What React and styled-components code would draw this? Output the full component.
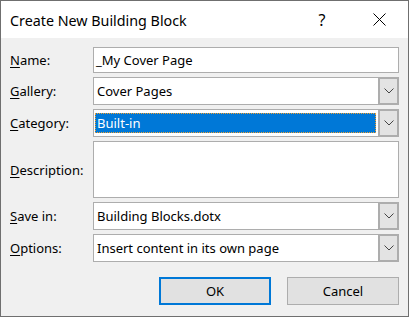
import React from "react"
import styled, { createGlobalStyle } from "styled-components"

const GlobalStyle = createGlobalStyle`
  html, body {
    margin: 0;
    padding: 0;
    background: #f0f0f0;
  }
  body {
    font-family: "Segoe UI", "Noto Sans", "Open Sans", sans-serif;
    color: #000;
  }
`

const Window = styled.div`
  width: 409px;
  height: 317px;
  box-sizing: border-box;
  border: 1px solid #6f6f6f;
  background: #f0f0f0;
  display: flex;
  flex-direction: column;
`

const TitleBar = styled.div`
  height: 37px;
  background: #fff;
  display: flex;
  align-items: center;
  padding-left: 9px;
`

const Title = styled.span`
  flex: 1;
  font-size: 14.3px;
  color: #000;
  padding-top: 1px;
`

const TitleButton = styled.div`
  width: ${p => p.w}px;
  height: 37px;
  display: flex;
  align-items: center;
  justify-content: center;
  font-size: 16px;
`

const Body = styled.div`
  flex: 1;
  padding: 9px 9px 11px 9px;
  display: flex;
  flex-direction: column;
`

const Form = styled.div`
  display: grid;
  grid-template-columns: 83px 1fr;
  row-gap: 4px;
  align-items: center;
`

const Label = styled.label`
  font-size: 13px;
  u {
    text-decoration: underline;
    text-underline-offset: 2px;
  }
`

const TextBox = styled.div`
  height: ${p => p.h || 26}px;
  box-sizing: border-box;
  background: #fff;
  border: 1px solid #adadad;
  font-size: 13px;
  display: flex;
  align-items: ${p => (p.h ? "flex-start" : "center")};
  padding-left: 2px;
`

const Combo = styled.div`
  height: 28px;
  box-sizing: border-box;
  background: #fff;
  border: 1px solid #adadad;
  display: flex;
  align-items: stretch;
`

const ComboValue = styled.div`
  flex: 1;
  display: flex;
  align-items: center;
  padding: 3px 1px 3px 1px;
`

const ComboText = styled.div`
  flex: 1;
  height: 100%;
  box-sizing: border-box;
  display: flex;
  align-items: center;
  font-size: 13px;
  padding-left: 2px;
  background: ${p => (p.selected ? "#0078d7" : "transparent")};
  color: ${p => (p.selected ? "#fff" : "#000")};
  outline: ${p => (p.selected ? "1px dotted #f0a030" : "none")};
  outline-offset: -1px;
  margin-right: ${p => (p.selected ? 1 : 0)}px;
`

const DropButton = styled.div`
  width: 21px;
  margin: -1px -1px -1px 0;
  box-sizing: border-box;
  border: 2px solid #adadad;
  background: #e3e3e3;
  display: flex;
  align-items: center;
  justify-content: center;
`

const Buttons = styled.div`
  display: flex;
  justify-content: flex-end;
  gap: 16px;
  margin-top: 15px;
`

const Button = styled.div`
  width: 112px;
  height: 28px;
  box-sizing: border-box;
  background: #e1e1e1;
  border: ${p => (p.primary ? "2px solid #0078d7" : "1px solid #adadad")};
  display: flex;
  align-items: center;
  justify-content: center;
  font-size: 13px;
`

const Chevron = () => (
  <svg width="10" height="6" viewBox="0 0 10 6">
    <path d="M0.5 0.5 L5 5 L9.5 0.5" fill="none" stroke="#444" strokeWidth="1" />
  </svg>
)

const CloseIcon = () => (
  <svg width="13" height="13" viewBox="0 0 13 13">
    <path d="M0.5 0.5 L12.5 12.5 M12.5 0.5 L0.5 12.5" fill="none" stroke="#000" strokeWidth="1" />
  </svg>
)

const ComboField = ({ value, selected }) => (
  <Combo>
    <ComboValue>
      <ComboText selected={selected}>{value}</ComboText>
    </ComboValue>
    <DropButton>
      <Chevron />
    </DropButton>
  </Combo>
)

export default function App() {
  return (
    <>
      <GlobalStyle />
      <Window>
        <TitleBar>
          <Title>Create New Building Block</Title>
          <TitleButton w={56}>?</TitleButton>
          <TitleButton w={58}>
            <CloseIcon />
          </TitleButton>
        </TitleBar>
        <Body>
          <Form>
            <Label><u>N</u>ame:</Label>
            <TextBox>_My Cover Page</TextBox>

            <Label><u>G</u>allery:</Label>
            <ComboField value="Cover Pages" />

            <Label><u>C</u>ategory:</Label>
            <ComboField value="Built-in" selected />

            <Label><u>D</u>escription:</Label>
            <TextBox h={57} />

            <Label><u>S</u>ave in:</Label>
            <ComboField value="Building Blocks.dotx" />

            <Label><u>O</u>ptions:</Label>
            <ComboField value="Insert content in its own page" />
          </Form>
          <Buttons>
            <Button primary>OK</Button>
            <Button>Cancel</Button>
          </Buttons>
        </Body>
      </Window>
    </>
  )
}
